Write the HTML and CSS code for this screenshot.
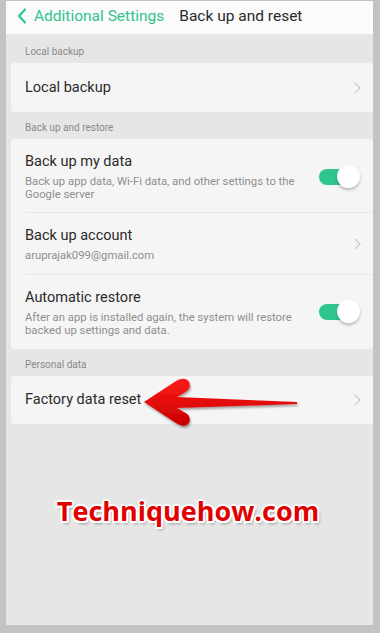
FILE: index.html
```html
<!DOCTYPE html>
<html>
<head>
<meta charset="utf-8">
<link rel="stylesheet" href="styles.css">
</head>
<body>
<div class="screen">
  <header class="topbar">
    <div class="back">
      <svg class="back-icon" width="10" height="16" viewBox="0 0 10 16"><polyline points="8,1.5 2,8 8,14.5" fill="none" stroke="#2fc48d" stroke-width="2.2" stroke-linecap="round" stroke-linejoin="round"/></svg>
      <span>Additional Settings</span>
    </div>
    <div class="title">Back up and reset</div>
  </header>

  <div class="section-label first">Local backup</div>
  <div class="card">
    <div class="row row-single">
      <div class="row-text"><div class="row-title">Local backup</div></div>
      <svg class="chev" width="7" height="12" viewBox="0 0 7 12"><polyline points="1,1 6,6 1,11" fill="none" stroke="#c9c9c9" stroke-width="1.2"/></svg>
    </div>
  </div>

  <div class="section-label">Back up and restore</div>
  <div class="card">
    <div class="row row-a">
      <div class="row-text">
        <div class="row-title">Back up my data</div>
        <div class="row-sub">Back up app data, Wi-Fi data, and other settings to the Google server</div>
      </div>
      <div class="toggle"><div class="knob"></div></div>
    </div>
    <div class="row row-b">
      <div class="row-text">
        <div class="row-title">Back up account</div>
        <div class="row-sub">aruprajak099@gmail.com</div>
      </div>
      <svg class="chev" width="7" height="12" viewBox="0 0 7 12"><polyline points="1,1 6,6 1,11" fill="none" stroke="#c9c9c9" stroke-width="1.2"/></svg>
    </div>
    <div class="row row-c">
      <div class="row-text">
        <div class="row-title">Automatic restore</div>
        <div class="row-sub">After an app is installed again, the system will restore backed up settings and data.</div>
      </div>
      <div class="toggle"><div class="knob"></div></div>
    </div>
  </div>

  <div class="section-label">Personal data</div>
  <div class="card card-reset">
    <div class="row row-single">
      <div class="row-text"><div class="row-title">Factory data reset</div></div>
      <svg class="chev" width="7" height="12" viewBox="0 0 7 12"><polyline points="1,1 6,6 1,11" fill="none" stroke="#c9c9c9" stroke-width="1.2"/></svg>
    </div>
    <svg class="arrow" width="300" height="60" viewBox="0 0 300 60">
      <defs>
        <linearGradient id="ag" x1="0" y1="0" x2="0" y2="1">
          <stop offset="0" stop-color="#ff1a1a"/>
          <stop offset="1" stop-color="#c80000"/>
        </linearGradient>
        <filter id="sh" x="-10%" y="-30%" width="120%" height="160%">
          <feDropShadow dx="1" dy="2" stdDeviation="1.2" flood-color="#000" flood-opacity="0.35"/>
        </filter>
      </defs>
      <path d="M133,26 L165,5 Q174,0 178,6 Q181,13 173,17 L166,21 L286,26 L286,28 L166,32 L173,36 Q181,40 178,47 Q174,53 165,47 Z" fill="url(#ag)" filter="url(#sh)"/>
    </svg>
  </div>

  <div class="watermark">Techniquehow.com</div>
</div>
</body>
</html>
```

FILE: styles.css
```css
* { box-sizing: border-box; }
html, body { margin: 0; }
body {
  background: #c3c3c3;
  padding: 1px 7px 8px 6px;
  font-family: Roboto, "Noto Sans", "Liberation Sans", sans-serif;
}
.screen {
  height: 624px;
  background: #e6e6e6;
  padding: 0 0 0 5px;
  display: flex;
  flex-direction: column;
}
.topbar {
  height: 33px;
  margin-left: -5px;
  background: #fbfbfb;
  display: flex;
  align-items: center;
  padding: 0 0 4px 11px;
  gap: 15px;
}
.back {
  display: flex;
  align-items: center;
  gap: 7px;
  color: #2fc48d;
  font-size: 15.5px;
}
.title {
  color: #2a2a2a;
  font-size: 15.5px;
}
.section-label {
  font-size: 10px;
  color: #8a8a8a;
  height: 27px;
  padding: 10px 0 0 14px;
}
.section-label.first {
  height: 29px;
  padding-top: 12px;
}
.card {
  background: #f5f5f5;
  border-radius: 3px;
  position: relative;
}
.row {
  display: flex;
  align-items: center;
  margin-left: 14px;
  padding: 0 15px 0 0;
}
.row + .row { border-top: 1px solid #e9e9e9; }
.row-single { height: 49px; }
.card-reset .row-single { height: 48px; }
.row-a { height: 73px; padding-top: 2px; }
.row-b { height: 62px; }
.row-c { height: 75px; }
.row-text { flex: 1; min-width: 0; }
.row-title {
  font-size: 14.5px;
  color: #2a2a2a;
  line-height: 20px;
}
.row-sub {
  font-size: 11.3px;
  color: #8e8e8e;
  line-height: 13px;
  margin-top: 3px;
  max-width: 278px;
}
.chev { flex: none; margin-right: -3px; }
.toggle {
  flex: none;
  width: 40px;
  height: 16px;
  border-radius: 8px;
  background: #2fc68e;
  position: relative;
  margin-right: -1px;
}
.knob {
  position: absolute;
  right: -1px;
  top: -4px;
  width: 23px;
  height: 23px;
  border-radius: 50%;
  background: #fff;
  box-shadow: 0 2px 3px rgba(0,0,0,0.25);
}
.arrow {
  position: absolute;
  left: 0;
  top: 0;
}
.watermark {
  margin-top: 68px;
  text-align: center;
  padding-right: 8px;
  font-family: "Open Sans", "Noto Sans", sans-serif;
  font-weight: 700;
  font-size: 27px;
  color: #e00000;
  text-shadow:
    2px 0 #fff, -2px 0 #fff, 0 2px #fff, 0 -2px #fff,
    1.5px 1.5px #fff, -1.5px 1.5px #fff, 1.5px -1.5px #fff, -1.5px -1.5px #fff,
    2px 3px 3px rgba(0,0,0,0.35);
}
```
